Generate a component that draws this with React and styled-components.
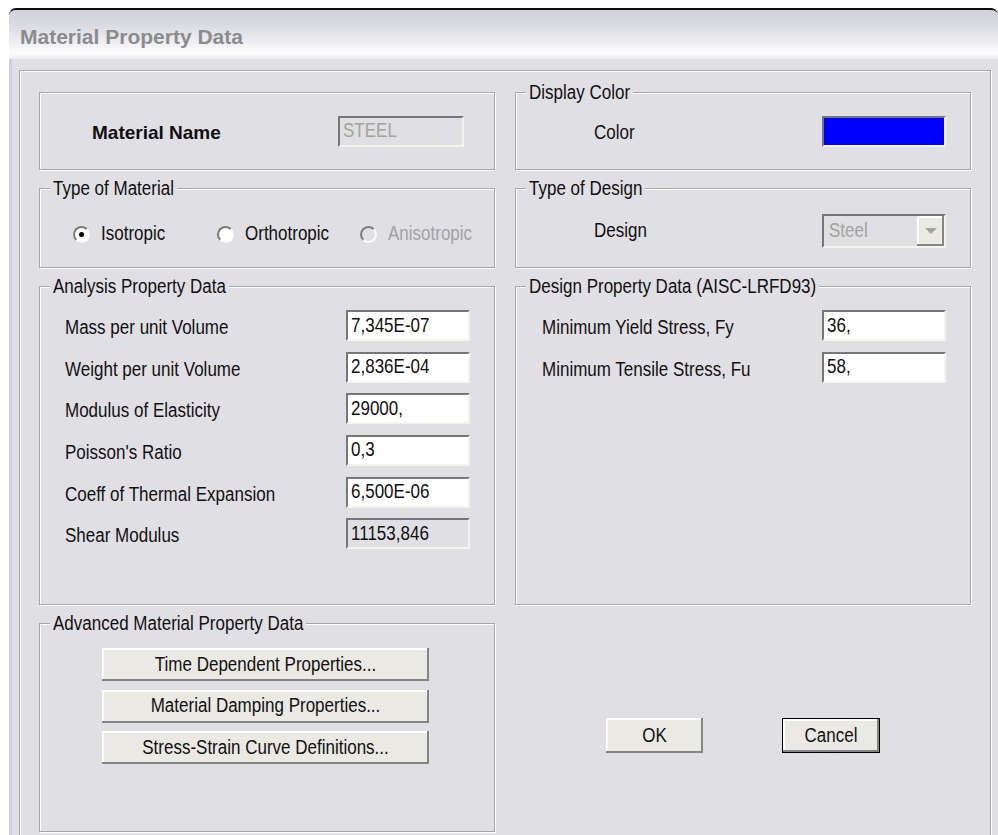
import React from 'react';
import styled, { createGlobalStyle, css } from 'styled-components';

const PANEL = '#e0dfe3';
const FACE = '#eae9e4';
const INK = '#111111';
const GREY_TEXT = '#a4a39c';
const FONT = '"Liberation Sans", Arial, sans-serif';

const GlobalStyle = createGlobalStyle`
  html, body { margin: 0; padding: 0; background: #ffffff; overflow: hidden; }
  body { font-family: ${FONT}; font-size: 17px; color: ${INK}; }
  *, *::before, *::after { box-sizing: border-box; }
`;

/* classic 3D edges */
const sunken = css`
  border: 2px solid;
  border-color: #777777 #f4f4ef #f4f4ef #777777;
`;

const raised = css`
  border: 0;
  background: ${FACE};
  box-shadow: inset -2px -2px 0 #858585, inset 2px 2px 0 #ffffff;
`;

const etched = css`
  border: 1px solid #a6a5aa;
  box-shadow: inset 1px 1px 0 #ffffff, 1px 1px 0 #ffffff;
`;

/* the dialog font is tall and narrow: stretch the glyphs vertically */
const Glyphs = styled.span`
  display: inline-block;
  transform: scaleY(1.14);
  white-space: nowrap;
`;

const Window = styled.div`
  width: 989px;
  height: 827px;
  margin: 8px 0 0 9px;
  display: flex;
  flex-direction: column;
  overflow: hidden;
`;

const TitleBar = styled.header`
  flex: none;
  height: 51px;
  border-top: 2px solid #0d0d0d;
  border-radius: 7px 7px 0 0;
  background: linear-gradient(
    180deg,
    #d2d2da 0%,
    #dadae1 30%,
    #eeeef2 65%,
    #fdfdfd 88%,
    #ececf0 100%
  );
  padding: 7px 0 0 11px;
`;

const Title = styled.h1`
  margin: 0;
  font: bold 21px/40px ${FONT};
  color: #8c8c8c;
`;

const Body = styled.main`
  flex: 1;
  min-height: 0;
  overflow: hidden;
  background: ${PANEL};
  border-left: 3px solid #cfcfd7;
  padding: 11px 7px 0 7px;
`;

const Frame = styled.div`
  ${etched};
  height: 800px;
  padding: 21px 19px 0 19px;
  display: grid;
  grid-template-columns: 456px 456px;
  grid-template-rows: 78px 80px 319px 209px;
  column-gap: 20px;
  row-gap: 18px;
  align-content: start;
`;

const GroupBox = styled.section`
  ${etched};
  position: relative;
  padding: ${p => p.$pad};
  display: flex;
  flex-direction: column;
  justify-content: ${p => (p.$center ? 'center' : 'flex-start')};
`;

const Caption = styled.h2`
  position: absolute;
  top: -10px;
  left: 10px;
  margin: 0;
  padding: 0 3px;
  background: ${PANEL};
  font: 17px/20px ${FONT};
  font-weight: normal;
  color: ${INK};
`;

const InlineRow = styled.div`
  display: flex;
  align-items: center;
  justify-content: space-between;
`;

const StrongLabel = styled.span`
  font: bold 19px/22px ${FONT};
  padding-top: 4px;
`;

const Label = styled.span`
  line-height: 20px;
  padding-top: ${p => p.$drop ?? 5}px;
`;

const Field = styled.div`
  ${sunken};
  width: ${p => p.$w}px;
  height: 31px;
  padding-left: 3px;
  display: flex;
  align-items: center;
  color: ${p => (p.$tone === 'disabled' ? GREY_TEXT : INK)};
  background: ${p => (p.$tone ? PANEL : '#ffffff')};
`;

const Swatch = styled.div`
  ${sunken};
  width: 124px;
  height: 31px;
  background: ${p => p.$color};
`;

const Combo = styled.div`
  ${sunken};
  width: 124px;
  height: 34px;
  display: flex;
  background: ${PANEL};
  padding-left: 5px;
`;

const ComboText = styled.span`
  flex: 1;
  display: flex;
  align-items: center;
  color: ${GREY_TEXT};
`;

const ComboButton = styled.span`
  ${raised};
  width: 27px;
  display: grid;
  place-items: center;
  &::after {
    content: '';
    border-left: 6px solid transparent;
    border-right: 6px solid transparent;
    border-top: 6px solid #a3a3a3;
  }
`;

const RadioGroup = styled.div`
  display: grid;
  grid-template-columns: 144px 143px auto;
  align-items: center;
`;

const RadioOption = styled.label`
  display: flex;
  align-items: center;
  gap: 11px;
  color: ${p => (p.$disabled ? '#a2a2a2' : INK)};
`;

const RadioDot = styled.span`
  width: 17px;
  height: 17px;
  border-radius: 50%;
  border: 2px solid;
  border-color: #7e7e7e #fbfbf8 #fbfbf8 #7e7e7e;
  background: ${p => (p.$disabled ? PANEL : '#ffffff')};
  display: grid;
  place-items: center;
  &::after {
    content: '';
    width: 5px;
    height: 5px;
    border-radius: 50%;
    background: ${p => (p.$checked ? '#000000' : 'transparent')};
  }
`;

const FieldList = styled.div`
  display: grid;
  row-gap: 10.67px;
`;

const FieldRow = styled.div`
  display: grid;
  grid-template-columns: 1fr auto;
  align-items: center;
`;

const ButtonStack = styled.div`
  display: grid;
  row-gap: 8.67px;
  justify-content: start;
`;

const PushButton = styled.button`
  ${raised};
  width: ${p => p.$w}px;
  height: ${p => p.$h}px;
  margin: 0;
  padding: 0;
  font: 17px ${FONT};
  color: ${INK};
  ${p =>
    p.$default &&
    css`
      border: 1px solid #000000;
    `}
`;

const Actions = styled.div`
  display: flex;
  justify-content: center;
  align-items: flex-start;
  gap: 79px;
  padding-top: 95px;
`;

const analysisFields = [
  { label: 'Mass per unit Volume', value: '7,345E-07' },
  { label: 'Weight per unit Volume', value: '2,836E-04' },
  { label: 'Modulus of Elasticity', value: '29000,' },
  { label: "Poisson's Ratio", value: '0,3' },
  { label: 'Coeff of Thermal Expansion', value: '6,500E-06' },
  { label: 'Shear Modulus', value: '11153,846', tone: 'readonly' },
];

const designFields = [
  { label: 'Minimum Yield Stress, Fy', value: '36,' },
  { label: 'Minimum Tensile Stress, Fu', value: '58,' },
];

const materialTypes = [
  { label: 'Isotropic', checked: true },
  { label: 'Orthotropic' },
  { label: 'Anisotropic', disabled: true },
];

const advancedButtons = [
  'Time Dependent Properties...',
  'Material Damping Properties...',
  'Stress-Strain Curve Definitions...',
];

export default function App() {
  return (
    <>
      <GlobalStyle />
      <Window>
        <TitleBar>
          <Title>Material Property Data</Title>
        </TitleBar>
        <Body>
          <Frame>
            <GroupBox $center $pad="0 30px 0 52px">
              <InlineRow>
                <StrongLabel>Material Name</StrongLabel>
                <Field $w={126} $tone="disabled">
                  <Glyphs>STEEL</Glyphs>
                </Field>
              </InlineRow>
            </GroupBox>

            <GroupBox $center $pad="0 24px 0 78px">
              <Caption>
                <Glyphs>Display Color</Glyphs>
              </Caption>
              <InlineRow>
                <Label $drop={4}>
                  <Glyphs>Color</Glyphs>
                </Label>
                <Swatch $color="#0000ff" />
              </InlineRow>
            </GroupBox>

            <GroupBox $center $pad="12px 0 0 33px">
              <Caption>
                <Glyphs>Type of Material</Glyphs>
              </Caption>
              <RadioGroup>
                {materialTypes.map(t => (
                  <RadioOption key={t.label} $disabled={t.disabled}>
                    <RadioDot $checked={t.checked} $disabled={t.disabled} />
                    <Glyphs>{t.label}</Glyphs>
                  </RadioOption>
                ))}
              </RadioGroup>
            </GroupBox>

            <GroupBox $center $pad="6px 24px 0 78px">
              <Caption>
                <Glyphs>Type of Design</Glyphs>
              </Caption>
              <InlineRow>
                <Label $drop={0}>
                  <Glyphs>Design</Glyphs>
                </Label>
                <Combo>
                  <ComboText>
                    <Glyphs>Steel</Glyphs>
                  </ComboText>
                  <ComboButton />
                </Combo>
              </InlineRow>
            </GroupBox>

            <GroupBox $pad="23px 24px 0 25px">
              <Caption>
                <Glyphs>Analysis Property Data</Glyphs>
              </Caption>
              <FieldList>
                {analysisFields.map(f => (
                  <FieldRow key={f.label}>
                    <Label>
                      <Glyphs>{f.label}</Glyphs>
                    </Label>
                    <Field $w={124} $tone={f.tone}>
                      <Glyphs>{f.value}</Glyphs>
                    </Field>
                  </FieldRow>
                ))}
              </FieldList>
            </GroupBox>

            <GroupBox $pad="23px 24px 0 26px">
              <Caption>
                <Glyphs>Design Property Data (AISC-LRFD93)</Glyphs>
              </Caption>
              <FieldList>
                {designFields.map(f => (
                  <FieldRow key={f.label}>
                    <Label>
                      <Glyphs>{f.label}</Glyphs>
                    </Label>
                    <Field $w={124}>
                      <Glyphs>{f.value}</Glyphs>
                    </Field>
                  </FieldRow>
                ))}
              </FieldList>
            </GroupBox>

            <GroupBox $pad="24px 0 0 62px">
              <Caption>
                <Glyphs>Advanced Material Property Data</Glyphs>
              </Caption>
              <ButtonStack>
                {advancedButtons.map(b => (
                  <PushButton key={b} $w={327} $h={33}>
                    <Glyphs>{b}</Glyphs>
                  </PushButton>
                ))}
              </ButtonStack>
            </GroupBox>

            <Actions>
              <PushButton $w={97} $h={35}>
                <Glyphs>OK</Glyphs>
              </PushButton>
              <PushButton $w={98} $h={35} $default>
                <Glyphs>Cancel</Glyphs>
              </PushButton>
            </Actions>
          </Frame>
        </Body>
      </Window>
    </>
  );
}
